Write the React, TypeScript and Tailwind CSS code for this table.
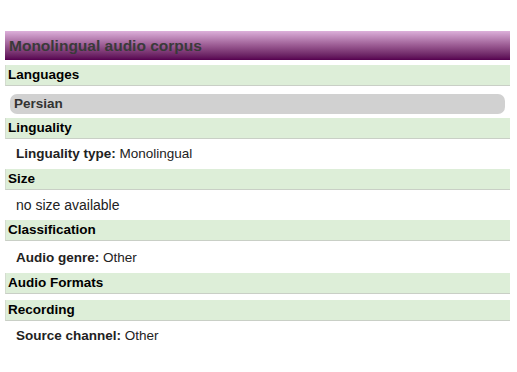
function Bar({ title, className = "" }: { title: string; className?: string }) {
  return (
    <h3
      className={`h-[21px] border-b border-l border-[#c9cfc6] border-l-[#d4dcd0] bg-[#ddeed8] pl-[2px] text-[13.5px] font-bold leading-[20px] text-black ${className}`}
    >
      {title}
    </h3>
  );
}

function Field({ label, value, className = "" }: { label: string; value: string; className?: string }) {
  return (
    <p className={`pl-[11px] text-[13.5px] leading-[30px] text-[#222] ${className}`}>
      <span className="font-bold">{label}:</span> {value}
    </p>
  );
}

export default function App() {
  return (
    <div className="min-h-[372px] bg-white pt-[31px] font-['Liberation_Sans',Arial,sans-serif]">
      <div className="mx-[5px] w-[505px]">
        <h2 className="h-[29px] bg-gradient-to-b from-[#dcb0da] via-[#9a5a92] to-[#560050] pl-[4px] text-[15.5px] font-bold leading-[30px] text-[#3a3a3a]">
          Monolingual audio corpus
        </h2>

        <Bar title="Languages" className="mt-[5px]" />
        <div className="mx-[5px] mt-[8px] h-[20px] rounded-[7px] bg-[#d1d1d1] pl-[4px] text-[13.5px] font-bold leading-[20px] text-[#333]">
          Persian
        </div>

        <Bar title="Linguality" className="mt-[4px]" />
        <Field label="Linguality type" value="Monolingual" className="h-[30px]" />

        <Bar title="Size" />
        <p className="h-[30px] pl-[11px] text-[14px] leading-[30px] text-[#222]">no size available</p>

        <Bar title="Classification" />
        <Field label="Audio genre" value="Other" className="h-[32px] pt-[2px]" />

        <Bar title="Audio Formats" className="mb-[6px]" />

        <Bar title="Recording" />
        <Field label="Source channel" value="Other" className="leading-[28px]" />
      </div>
    </div>
  );
}
